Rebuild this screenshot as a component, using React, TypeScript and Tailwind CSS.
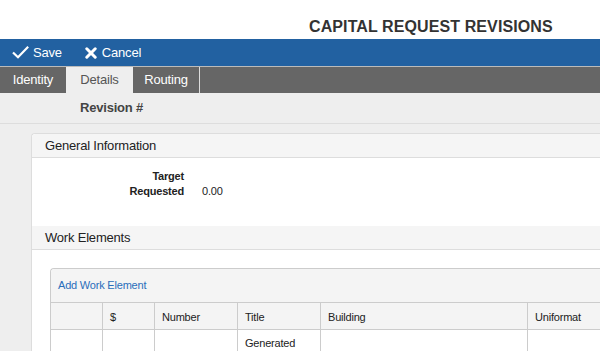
import React from 'react';

const tabs = ['Identity', 'Details', 'Routing'];

const columns = [
  { label: '', w: 'w-[52px]' },
  { label: '$', w: 'w-[52px]' },
  { label: 'Number', w: 'w-[83px]' },
  { label: 'Title', w: 'w-[83px]' },
  { label: 'Building', w: 'w-[207px]' },
  { label: 'Uniformat', w: 'flex-1' },
];

const App: React.FC = () => {
  return (
    <div className="w-[600px] h-[351px] overflow-hidden bg-white font-['Liberation_Sans',Arial,sans-serif] text-[#333] tracking-[-0.2px]">
      {/* page title */}
      <div className="h-[39px] pl-[309px] pt-[17px]">
        <h1 className="text-[16px] leading-[20px] font-bold text-[#333] tracking-[0.1px] whitespace-nowrap">CAPITAL REQUEST REVISIONS</h1>
      </div>

      {/* toolbar */}
      <div className="h-[27px] bg-[#2261a1] flex items-center text-white text-[13px]">
        <button className="flex items-center pl-[12px]">
          <svg width="17" height="13" viewBox="0 0 17 13" fill="none" stroke="currentColor" strokeWidth="2.2" strokeLinecap="square">
            <polyline points="1.8,7.2 6,11.2 15.4,1.6" />
          </svg>
          <span className="ml-[4px]">Save</span>
        </button>
        <button className="flex items-center ml-[23px]">
          <svg width="12" height="12" viewBox="0 0 12 12" fill="none" stroke="currentColor" strokeWidth="3" strokeLinecap="round">
            <line x1="1.8" y1="1.8" x2="10.2" y2="10.2" />
            <line x1="10.2" y1="1.8" x2="1.8" y2="10.2" />
          </svg>
          <span className="ml-[5px]">Cancel</span>
        </button>
      </div>

      {/* tabs */}
      <div className="h-[27px] bg-[#666] flex text-[13px] border-t border-[#bbb]">
        {tabs.map((t) => (
          <div
            key={t}
            className={
              t === 'Details'
                ? 'w-[67px] flex items-center justify-center bg-[#eee] text-[#555]'
                : t === 'Routing'
                ? 'w-[67px] flex items-center justify-center text-white border-r border-[#ddd]'
                : 'w-[66px] flex items-center justify-center text-white'
            }
          >
            {t}
          </div>
        ))}
      </div>

      {/* revision row */}
      <div className="h-[31px] bg-[#eee] border-b border-[#ddd] flex items-center pl-[80px]">
        <span className="text-[13px] font-bold text-[#444]">Revision #</span>
      </div>

      {/* content */}
      <div className="bg-[#eee] pt-[9px] pl-[31px] h-[300px]">
        <div className="bg-white border-l border-t border-[#ddd] rounded-tl-[4px] h-full">
          <div className="h-[24px] bg-[#f5f5f5] border-b border-[#ddd] flex items-center pl-[13px] text-[13px] text-[#222] rounded-tl-[4px]">
            General Information
          </div>
          <div className="h-[68px] pt-[11px] text-[11px] leading-[15px] text-[#222]">
            <div className="flex">
              <span className="w-[152px] text-right font-bold">Target</span>
            </div>
            <div className="flex">
              <span className="w-[152px] text-right font-bold">Requested</span>
              <span className="ml-[18px]">0.00</span>
            </div>
          </div>
          <div className="h-[24px] bg-[#f5f5f5] border-b border-[#ddd] flex items-center pl-[13px] text-[13px] text-[#222]">
            Work Elements
          </div>
          <div className="pt-[18px] pl-[18px]">
            <div className="border-l border-t border-[#ccc] rounded-tl-[4px]">
              <div className="h-[34px] bg-[#f4f4f4] border-b border-[#ccc] flex items-center pl-[7px] text-[11px] text-[#2a6ebb] rounded-tl-[4px]">
                Add Work Element
              </div>
              <div className="flex h-[27px] bg-[#f4f4f4] border-b border-[#ccc] text-[11px] text-[#222]">
                {columns.map((c, i) => (
                  <div
                    key={i}
                    className={`${c.w} flex items-center pl-[7px] pt-[2px] ${i < columns.length - 1 ? 'border-r border-[#ccc]' : ''}`}
                  >
                    {c.label}
                  </div>
                ))}
              </div>
              <div className="flex h-[40px] bg-white text-[11px] leading-[15px] text-[#222]">
                {columns.map((c, i) => (
                  <div
                    key={i}
                    className={`${c.w} pl-[7px] pt-[6px] ${i < columns.length - 1 ? 'border-r border-[#ccc]' : ''}`}
                  >
                    {c.label === 'Title' ? 'Generated' : ''}
                  </div>
                ))}
              </div>
            </div>
          </div>
        </div>
      </div>
    </div>
  );
};

export default App;
